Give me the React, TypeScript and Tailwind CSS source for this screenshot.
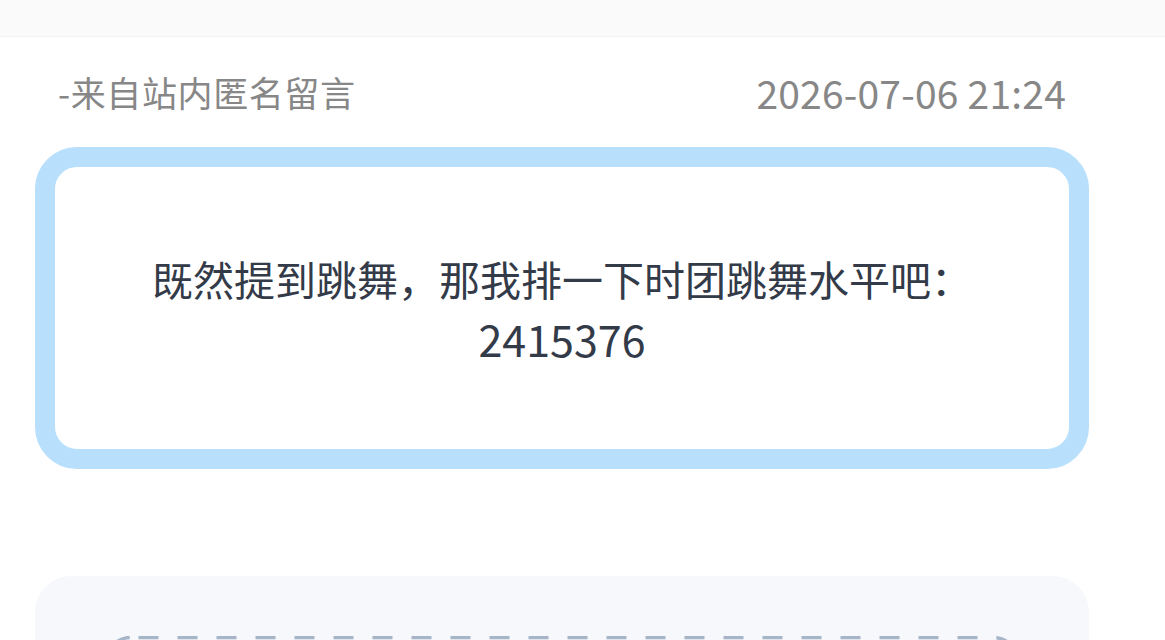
import React from "react";

const cjk = { fontFamily: '"Noto Sans CJK SC", "Noto Sans", sans-serif' };

function MessageCard({ text, extra }: { text: string; extra: string }) {
  return (
    <div className="h-[322px] rounded-[42px] border-[20px] border-[#b8dffb] bg-white flex flex-col items-center justify-center">
      <p className="text-[41px] leading-[60px] text-[#333a48] text-center">{text}</p>
      <p className="text-[43px] leading-[60px] text-[#333a48] text-center">{extra}</p>
    </div>
  );
}

// dashed drop zone outline, longer dashes than the native border-dashed gives
function DashedBox() {
  return (
    <div className="relative h-[200px]">
      <svg className="absolute inset-0 w-full h-full" preserveAspectRatio="none">
        <rect
          x="1.5"
          y="1.5"
          width="calc(100% - 3px)"
          height="calc(100% - 3px)"
          rx="24"
          fill="none"
          stroke="#a6b5c7"
          strokeWidth="3.5"
          strokeDasharray="20 19"
          strokeDashoffset="-8"
        />
      </svg>
    </div>
  );
}

export default function App() {
  return (
    <div className="w-[1165px] h-[640px] overflow-hidden bg-white" style={cjk}>
      {/* status strip */}
      <div className="h-[37px] bg-[#fafafa] border-b border-[#f3f3f3]" />

      <div className="ml-[35px] w-[1054px]">
        <div className="h-[110px] px-[23px] flex items-center justify-between text-[#878787]">
          <span className="text-[35px] tracking-[0.6px]">-来自站内匿名留言</span>
          <span className="text-[39px] tracking-[0.2px]">2026-07-06 21:24</span>
        </div>

        <MessageCard
          text="既然提到跳舞，那我排一下时团跳舞水平吧："
          extra="2415376"
        />

        {/* reply box */}
        <div className="mt-[107px] rounded-[36px] bg-[#f6f8fb] px-[70px] pt-[60px] pb-[40px]">
          <DashedBox />
        </div>
      </div>
    </div>
  );
}
